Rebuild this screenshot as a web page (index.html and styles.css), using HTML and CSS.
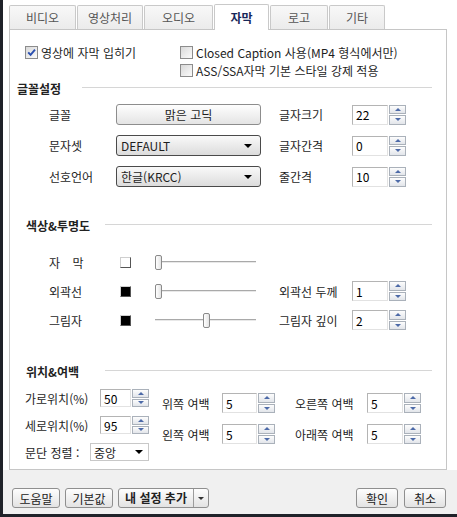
FILE: index.html
```html
<!DOCTYPE html>
<html lang="ko">
<head>
    <meta charset="UTF-8">
    <meta name="viewport" content="width=device-width, initial-scale=1.0">
    <title>자막 설정</title>
    <link rel="stylesheet" href="styles.css">
</head>
<body>
    <div class="window">
        <div class="tabs">
            <div class="tab tab-video">비디오</div>
            <div class="tab tab-proc">영상처리</div>
            <div class="tab tab-audio">오디오</div>
            <div class="tab tab-sub active">자막</div>
            <div class="tab tab-logo">로고</div>
            <div class="tab tab-etc">기타</div>
        </div>

        <div class="panel">
            <!-- 자막 표시 옵션 -->
            <div class="checks">
                <div class="check-col check-col-left">
                    <div class="check">
                        <span class="cb"><svg width="9" height="9" viewBox="0 0 9 9"><path d="M1.2 4.3 L3.6 6.9 L8 1.6" fill="none" stroke="#2b50b0" stroke-width="1.9"/></svg></span>
                        영상에 자막 입히기
                    </div>
                </div>
                <div class="check-col">
                    <div class="check"><span class="cb"></span>Closed Caption 사용(MP4 형식에서만)</div>
                    <div class="check"><span class="cb"></span>ASS/SSA자막 기본 스타일 강제 적용</div>
                </div>
            </div>

            <!-- 글꼴설정 -->
            <div class="sec-title sec-title-first"><span>글꼴설정</span><i class="rule"></i></div>
            <div class="font-rows">
                <div class="frow">
                    <span class="flabel">글꼴</span>
                    <div class="control btn-font">맑은 고딕</div>
                    <span class="rlabel">글자크기</span>
                    <div class="spin"><span class="spin-val">22</span><span class="spin-btns"><span class="up"></span><span class="down"></span></span></div>
                </div>
                <div class="frow">
                    <span class="flabel">문자셋</span>
                    <div class="control select"><span>DEFAULT</span><i class="caret"></i></div>
                    <span class="rlabel">글자간격</span>
                    <div class="spin"><span class="spin-val">0</span><span class="spin-btns"><span class="up"></span><span class="down"></span></span></div>
                </div>
                <div class="frow">
                    <span class="flabel">선호언어</span>
                    <div class="control select"><span>한글(KRCC)</span><i class="caret"></i></div>
                    <span class="rlabel">줄간격</span>
                    <div class="spin"><span class="spin-val">10</span><span class="spin-btns"><span class="up"></span><span class="down"></span></span></div>
                </div>
            </div>

            <!-- 색상&투명도 -->
            <div class="sec-title sec-title-color"><span>색상&amp;투명도</span><i class="rule"></i></div>
            <div class="color-rows">
                <div class="crow">
                    <span class="clabel clabel-spaced">자 막</span>
                    <span class="swatch swatch-white"></span>
                    <div class="slider"><div class="rail"><span class="thumb" style="left: 0%"></span></div></div>
                </div>
                <div class="crow">
                    <span class="clabel">외곽선</span>
                    <span class="swatch swatch-black"></span>
                    <div class="slider"><div class="rail"><span class="thumb" style="left: 0%"></span></div></div>
                    <span class="rlabel rlabel-color">외곽선 두께</span>
                    <div class="spin"><span class="spin-val">1</span><span class="spin-btns"><span class="up"></span><span class="down"></span></span></div>
                </div>
                <div class="crow">
                    <span class="clabel">그림자</span>
                    <span class="swatch swatch-black"></span>
                    <div class="slider"><div class="rail"><span class="thumb" style="left: 51%"></span></div></div>
                    <span class="rlabel rlabel-color">그림자 깊이</span>
                    <div class="spin"><span class="spin-val">2</span><span class="spin-btns"><span class="up"></span><span class="down"></span></span></div>
                </div>
            </div>

            <!-- 위치&여백 -->
            <div class="sec-title sec-title-pos"><span>위치&amp;여백</span><i class="rule"></i></div>
            <div class="pos">
                <div class="pos-col pos-col-1">
                    <div class="prow">
                        <span class="plabel">가로위치(%)</span>
                        <div class="spin spin-sm"><span class="spin-val">50</span><span class="spin-btns"><span class="up"></span><span class="down"></span></span></div>
                    </div>
                    <div class="prow">
                        <span class="plabel">세로위치(%)</span>
                        <div class="spin spin-sm"><span class="spin-val">95</span><span class="spin-btns"><span class="up"></span><span class="down"></span></span></div>
                    </div>
                    <div class="prow">
                        <span class="plabel plabel-align">문단 정렬 :</span>
                        <div class="flat-select"><span>중앙</span><i class="caret"></i></div>
                    </div>
                </div>
                <div class="pos-col pos-col-2">
                    <div class="prow">
                        <span class="plabel plabel-mid">위쪽 여백</span>
                        <div class="spin spin-mid"><span class="spin-val">5</span><span class="spin-btns"><span class="up"></span><span class="down"></span></span></div>
                    </div>
                    <div class="prow">
                        <span class="plabel plabel-mid">왼쪽 여백</span>
                        <div class="spin spin-mid"><span class="spin-val">5</span><span class="spin-btns"><span class="up"></span><span class="down"></span></span></div>
                    </div>
                </div>
                <div class="pos-col pos-col-3">
                    <div class="prow">
                        <span class="plabel plabel-right">오른쪽 여백</span>
                        <div class="spin"><span class="spin-val">5</span><span class="spin-btns"><span class="up"></span><span class="down"></span></span></div>
                    </div>
                    <div class="prow">
                        <span class="plabel plabel-right">아래쪽 여백</span>
                        <div class="spin"><span class="spin-val">5</span><span class="spin-btns"><span class="up"></span><span class="down"></span></span></div>
                    </div>
                </div>
            </div>
        </div>

        <footer class="footer">
            <div class="btn-group">
                <button class="btn">도움말</button>
                <button class="btn">기본값</button>
                <div class="btn btn-split">
                    <span class="split-main">내 설정 추가</span>
                    <span class="split-drop"><i class="caret caret-sm"></i></span>
                </div>
            </div>
            <div class="btn-group btn-group-right">
                <button class="btn btn-sm">확인</button>
                <button class="btn btn-sm">취소</button>
            </div>
        </footer>
    </div>
</body>
</html>
```

FILE: styles.css
```css
* {
    box-sizing: border-box;
}

body {
    margin: 0;
    font-family: "Noto Sans CJK KR", "Noto Sans", sans-serif;
    font-size: 12px;
    color: #1e1e1e;
    background: #fff;
}

.window {
    width: 457px;
    height: 517px;
    border-left: 3px solid #1f2229;
    border-bottom: 3px solid #1f2229;
    background: #fff;
    display: flex;
    flex-direction: column;
}

/* 탭 */
.tabs {
    display: flex;
    align-items: flex-end;
    gap: 1px;
    height: 29px;
    padding-left: 6px;
}

.tab {
    height: 24px;
    display: flex;
    align-items: center;
    justify-content: center;
    border: 1px solid #c9c9c9;
    border-bottom: none;
    border-radius: 2px 2px 0 0;
    background: linear-gradient(#f8f8f8, #ebebeb);
    color: #555;
}

.tab-video { width: 67px; }
.tab-proc { width: 66px; }
.tab-audio { width: 69px; }
.tab-sub { width: 55px; }
.tab-logo { width: 58px; }
.tab-etc { width: 56px; }

.tab.active {
    height: 26px;
    margin-bottom: -1px;
    background: #fff;
    color: #17285a;
    font-weight: bold;
    position: relative;
    z-index: 1;
}

/* 패널 */
.panel {
    width: 438px;
    height: 441px;
    margin-left: 6px;
    border: 1px solid #c6c6c6;
    background: #fff;
}

.checks {
    display: flex;
    margin-top: 13px;
    padding-left: 15px;
}

.check-col-left {
    width: 155px;
}

.check {
    display: flex;
    align-items: center;
    gap: 3px;
    height: 18px;
}

.cb {
    width: 13px;
    height: 13px;
    border: 1px solid #8c8c8c;
    background: linear-gradient(135deg, #d9d9d9, #fbfbfb);
    display: flex;
    align-items: center;
    justify-content: center;
}

.sec-title {
    display: flex;
    align-items: center;
    height: 16px;
    font-weight: bold;
    color: #222;
}

.sec-title span {
    width: 95px;
    padding-left: 16px;
}

.sec-title .rule {
    flex: 1;
    border-top: 1px solid #d6d6d6;
    margin-right: 14px;
    margin-top: -1px;
}

.sec-title-first {
    margin-top: 1px;
}

.sec-title-first span {
    width: 72px;
    padding-left: 7px;
}

.sec-title-color {
    margin-top: 30px;
}

.sec-title-pos {
    margin-top: 33px;
}

/* 글꼴설정 */
.font-rows {
    margin-top: 8px;
    display: flex;
    flex-direction: column;
    gap: 10px;
}

.frow {
    display: flex;
    align-items: center;
    height: 21px;
    padding-left: 39px;
}

.flabel {
    width: 67px;
}

.control {
    width: 145px;
    height: 21px;
}

.btn-font {
    display: flex;
    align-items: center;
    justify-content: center;
    border: 1px solid #8d8d8d;
    border-radius: 3px;
    background: linear-gradient(#fefefe, #e4e4e4);
}

.select {
    display: flex;
    align-items: center;
    justify-content: space-between;
    padding: 0 8px 0 4px;
    border: 1px solid #4a4a4a;
    border-radius: 3px;
    background: linear-gradient(#f9f9f9, #dcdcdc);
}

.caret {
    width: 0;
    height: 0;
    border-left: 4px solid transparent;
    border-right: 4px solid transparent;
    border-top: 4px solid #000;
}

.caret-sm {
    border-left-width: 3px;
    border-right-width: 3px;
    border-top: 3px solid #333;
}

.rlabel {
    width: 73px;
    margin-left: 18px;
}

.rlabel-color {
    margin-left: 23px;
}

/* 스핀 박스 */
.spin {
    display: flex;
    width: 54px;
    height: 20px;
}

.spin-sm {
    width: 49px;
    height: 18px;
}

.spin-mid {
    width: 53px;
}

.spin-val {
    flex: 1;
    display: flex;
    align-items: center;
    padding-left: 3px;
    border: 1px solid;
    border-color: #b4b4b4 #e2e2e2 #e2e2e2 #b4b4b4;
    background: #fff;
    color: #000;
}

.spin-btns {
    width: 17px;
    display: flex;
    flex-direction: column;
    gap: 1px;
    margin-left: 1px;
}

.spin-btns span {
    flex: 1;
    display: flex;
    align-items: center;
    justify-content: center;
    border: 1px solid #aab1ba;
    background: linear-gradient(#fdfdfd, #e2e5ea);
}

.spin-btns .up::after,
.spin-btns .down::after {
    content: '';
    border-left: 3px solid transparent;
    border-right: 3px solid transparent;
}

.spin-btns .up::after {
    border-bottom: 3px solid #4d6aa8;
}

.spin-btns .down::after {
    border-top: 3px solid #4d6aa8;
}

/* 색상&투명도 */
.color-rows {
    margin-top: 19px;
    display: flex;
    flex-direction: column;
    gap: 9px;
}

.crow {
    display: flex;
    align-items: center;
    height: 20px;
    padding-left: 39px;
}

.clabel {
    width: 71px;
}

.clabel-spaced {
    word-spacing: 9px;
}

.swatch {
    width: 11px;
    height: 11px;
    border: 1px solid;
    border-color: #cfcfcf #555 #555 #cfcfcf;
}

.swatch-white {
    background: #fff;
}

.swatch-black {
    background: #000;
}

.slider {
    width: 101px;
    height: 20px;
    margin-left: 24px;
    padding-right: 7px;
    position: relative;
}

.slider::before {
    content: '';
    position: absolute;
    left: 0;
    right: 0;
    top: 9px;
    height: 1px;
    background: #a9a9a9;
    border-bottom: 1px solid #e8e8e8;
    box-sizing: content-box;
}

.rail {
    position: relative;
    height: 100%;
}

.thumb {
    position: absolute;
    top: 3px;
    width: 7px;
    height: 15px;
    border: 1px solid #8a8a8a;
    border-radius: 2px;
    background: linear-gradient(90deg, #fff, #e4e4e4);
}

/* 위치&여백 */
.pos {
    display: flex;
    margin-top: 10px;
    padding-left: 15px;
}

.pos-col {
    display: flex;
    flex-direction: column;
}

.pos-col-1 {
    gap: 9px;
}

.pos-col-1 .prow {
    height: 18px;
}

.pos-col-2,
.pos-col-3 {
    gap: 11px;
    padding-top: 4px;
}

.pos-col-2 {
    margin-left: 13px;
}

.pos-col-3 {
    margin-left: 20px;
}

.prow {
    display: flex;
    align-items: center;
    height: 20px;
}

.plabel {
    width: 75px;
}

.plabel-align {
    width: 65px;
}

.plabel-mid {
    width: 60px;
}

.plabel-right {
    width: 72px;
}

.flat-select {
    width: 59px;
    height: 18px;
    display: flex;
    align-items: center;
    justify-content: space-between;
    padding: 0 5px 0 3px;
    border: 1px solid #c8c8c8;
    background: #fff;
}

/* 하단 버튼 */
.footer {
    flex: 1;
    display: flex;
    justify-content: space-between;
    align-items: flex-start;
    padding: 18px 11px 0 9px;
    background: #f0f0f0;
}

.btn-group {
    display: flex;
    gap: 5px;
}

.btn-group-right {
    gap: 6px;
}

.btn {
    width: 48px;
    height: 20px;
    padding: 0;
    display: flex;
    align-items: center;
    justify-content: center;
    border: 1px solid #8f8f8f;
    border-radius: 3px;
    background: linear-gradient(#fefefe, #e3e3e3);
    font-family: inherit;
    font-size: 12px;
    color: #222;
}

.btn-sm {
    width: 42px;
}

.btn-split {
    width: 91px;
    justify-content: stretch;
}

.split-main {
    flex: 1;
    text-align: center;
    font-weight: bold;
    border-right: 1px solid #9c9c9c;
    height: 100%;
    line-height: 18px;
}

.split-drop {
    width: 14px;
    display: flex;
    align-items: center;
    justify-content: center;
}
```
